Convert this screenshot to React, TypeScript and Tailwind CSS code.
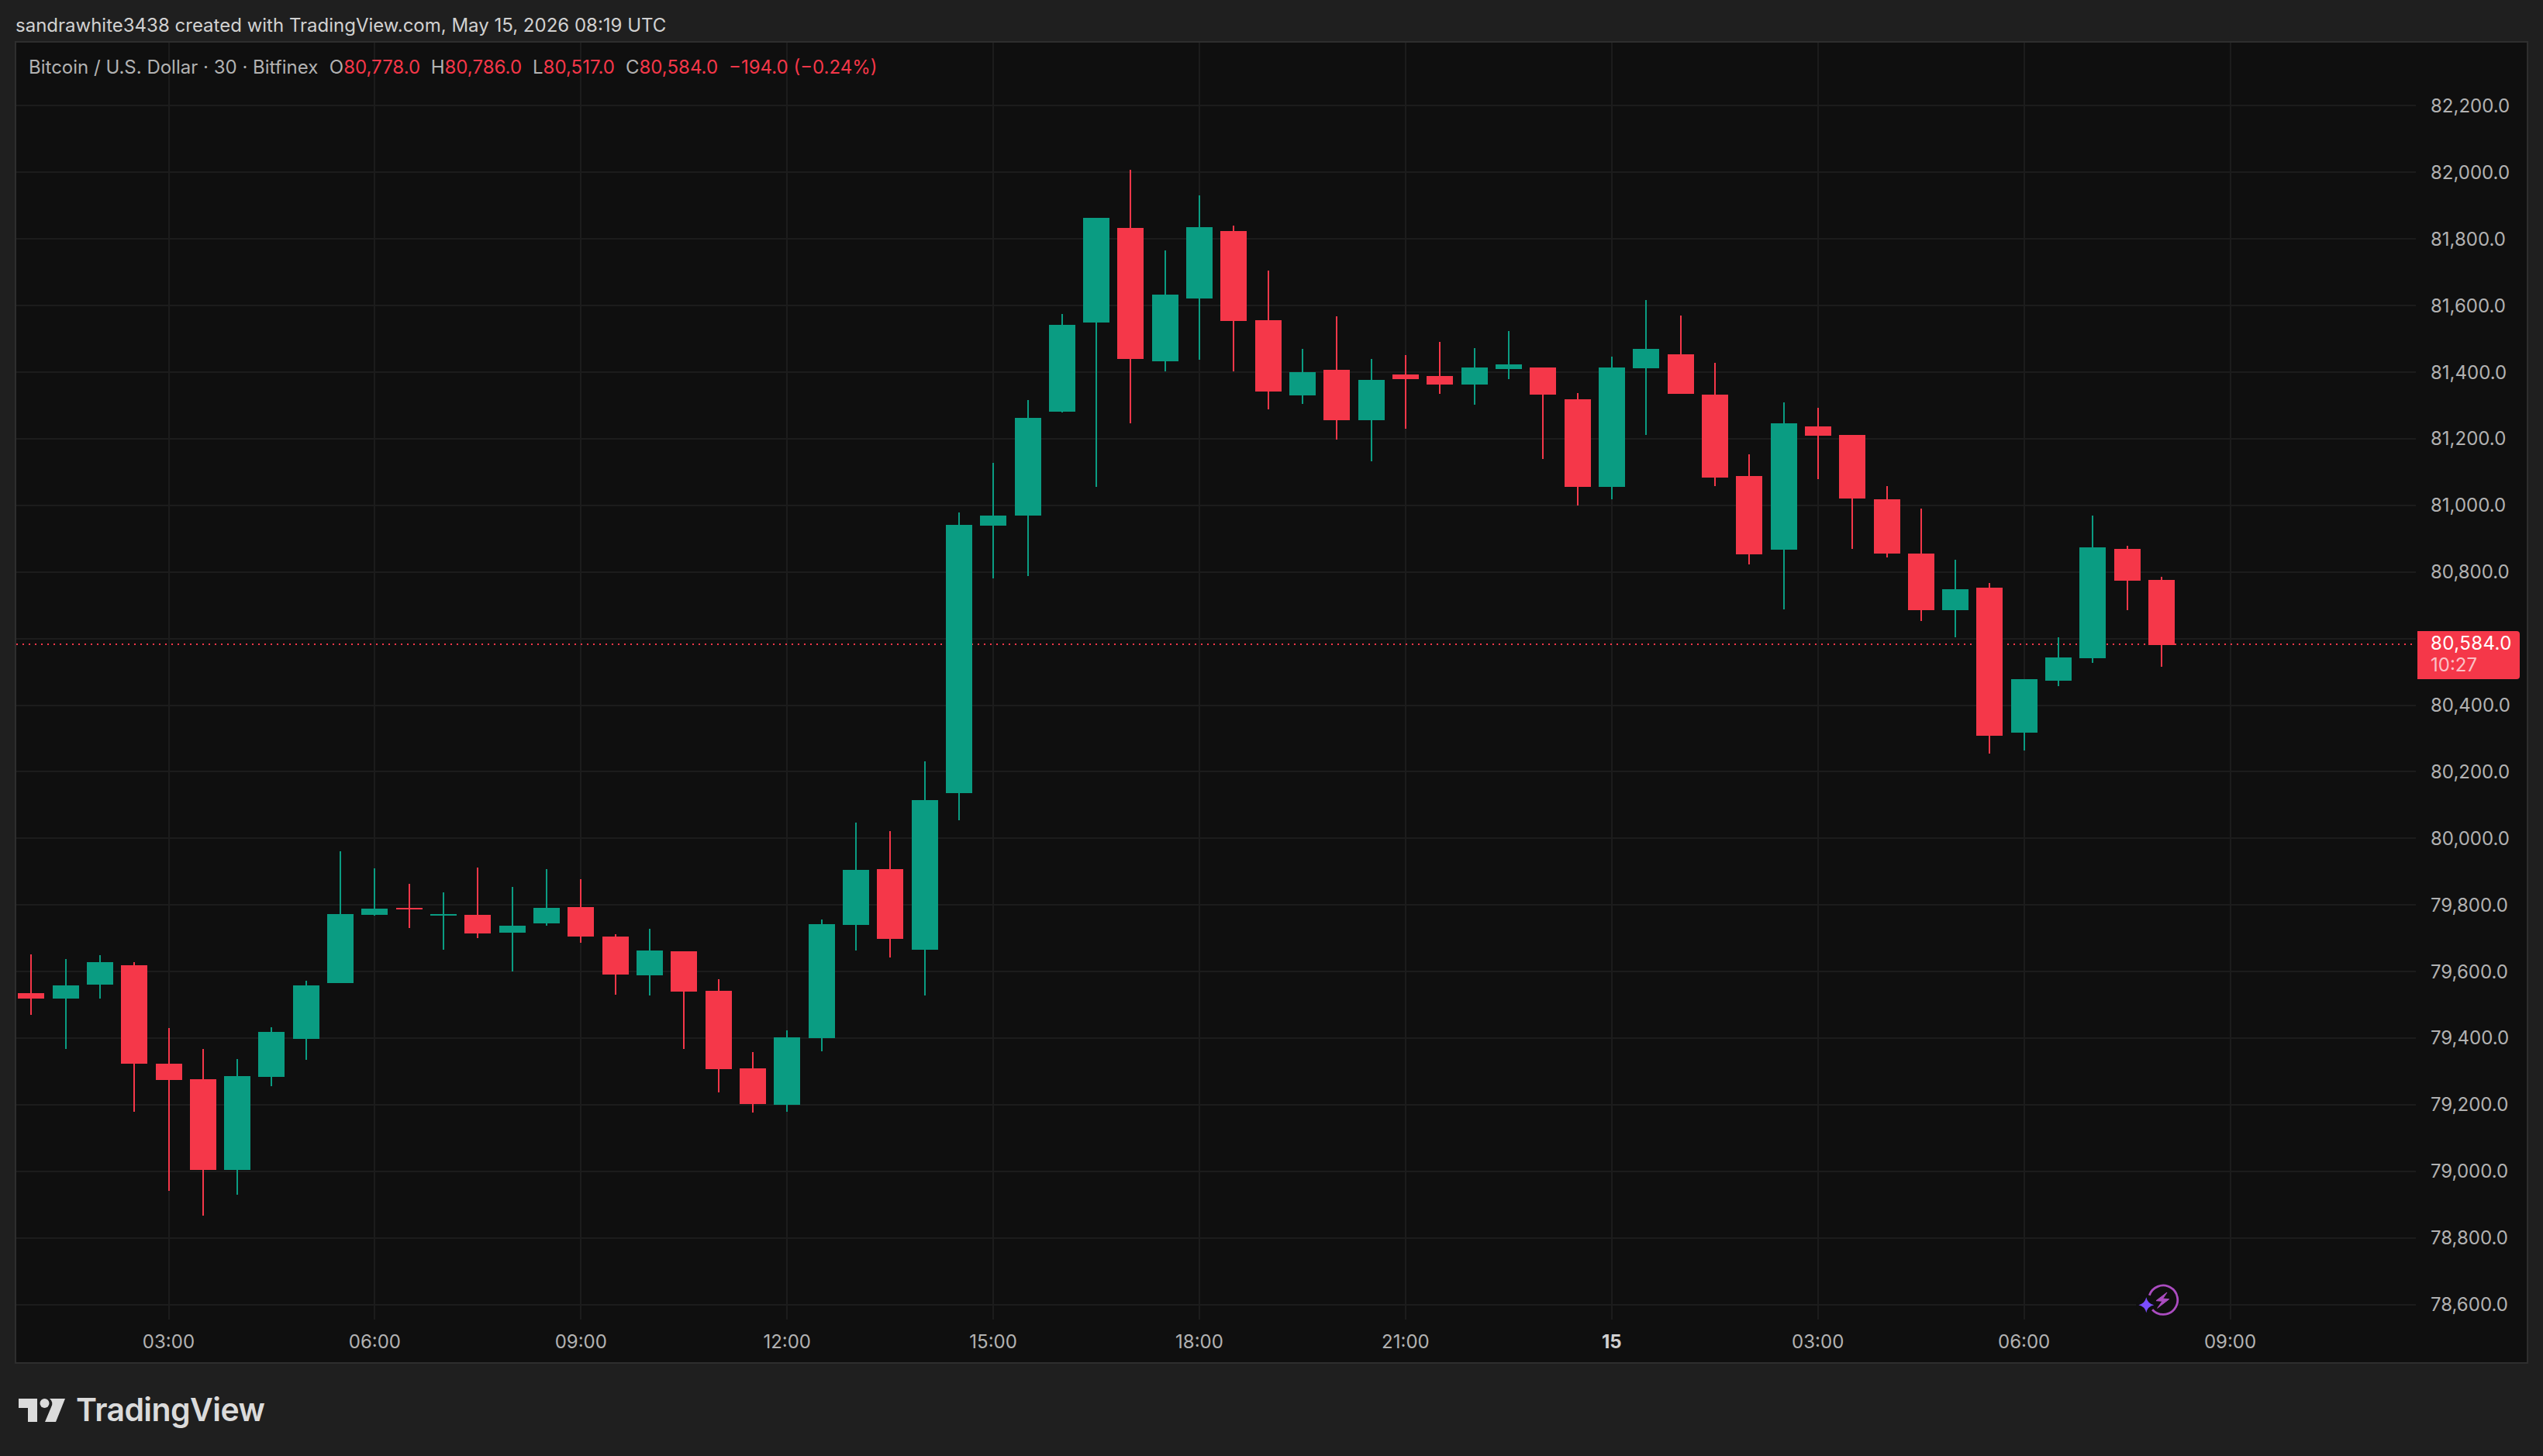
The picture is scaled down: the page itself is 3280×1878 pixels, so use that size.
import React from "react";

const UP = "#0a9c82";
const DOWN = "#f53749";

// wick top, body top, body bottom, wick bottom (page pixels), direction
type Candle = [number, number, number, number, "u" | "d"];

const candles: Candle[] = [
  [1231, 1281, 1288, 1309, "d"],
  [1237, 1271, 1288, 1353, "u"],
  [1232, 1241, 1270, 1288, "u"],
  [1241, 1245, 1372, 1434, "d"],
  [1326, 1372, 1393, 1536, "d"],
  [1353, 1392, 1509, 1568, "d"],
  [1366, 1388, 1509, 1541, "u"],
  [1325, 1331, 1389, 1401, "u"],
  [1265, 1271, 1340, 1367, "u"],
  [1098, 1179, 1268, 1268, "u"],
  [1120, 1172, 1180, 1181, "u"],
  [1140, 1171, 1173, 1197, "d"],
  [1151, 1179, 1181, 1225, "u"],
  [1119, 1180, 1204, 1210, "d"],
  [1144, 1194, 1203, 1253, "u"],
  [1121, 1171, 1191, 1194, "u"],
  [1134, 1170, 1208, 1216, "d"],
  [1205, 1208, 1257, 1283, "d"],
  [1198, 1226, 1258, 1284, "u"],
  [1227, 1227, 1279, 1353, "d"],
  [1263, 1278, 1379, 1409, "d"],
  [1357, 1378, 1424, 1435, "d"],
  [1329, 1338, 1425, 1434, "u"],
  [1186, 1192, 1339, 1356, "u"],
  [1061, 1122, 1193, 1226, "u"],
  [1072, 1121, 1211, 1235, "d"],
  [982, 1032, 1225, 1284, "u"],
  [661, 677, 1023, 1058, "u"],
  [597, 665, 678, 746, "u"],
  [516, 539, 665, 743, "u"],
  [405, 419, 531, 532, "u"],
  [281, 281, 416, 628, "u"],
  [219, 294, 463, 546, "d"],
  [323, 380, 466, 479, "u"],
  [252, 293, 385, 464, "u"],
  [291, 298, 414, 479, "d"],
  [349, 413, 505, 528, "d"],
  [450, 480, 510, 521, "u"],
  [408, 477, 542, 567, "d"],
  [463, 490, 542, 595, "u"],
  [458, 483, 489, 553, "d"],
  [441, 485, 496, 508, "d"],
  [449, 474, 496, 522, "u"],
  [427, 470, 476, 489, "u"],
  [474, 474, 509, 592, "d"],
  [507, 515, 628, 652, "d"],
  [460, 474, 628, 644, "u"],
  [387, 450, 475, 561, "u"],
  [407, 457, 508, 508, "d"],
  [468, 509, 616, 627, "d"],
  [586, 614, 715, 728, "d"],
  [519, 546, 709, 786, "u"],
  [526, 550, 562, 618, "d"],
  [561, 561, 643, 708, "d"],
  [627, 644, 714, 719, "d"],
  [656, 714, 787, 801, "d"],
  [722, 760, 787, 822, "u"],
  [752, 758, 949, 972, "d"],
  [876, 876, 945, 968, "u"],
  [822, 848, 878, 885, "u"],
  [665, 706, 849, 855, "u"],
  [704, 708, 749, 787, "d"],
  [744, 748, 832, 860, "d"],
];

// the 80,600.0 row sits behind the last price tag
const priceLabels = [
  "82,200.0", "82,000.0", "81,800.0", "81,600.0", "81,400.0", "81,200.0", "81,000.0",
  "80,800.0", "", "80,400.0", "80,200.0", "80,000.0", "79,800.0", "79,600.0",
  "79,400.0", "79,200.0", "79,000.0", "78,800.0", "78,600.0",
];

const timeLabels = ["03:00", "06:00", "09:00", "12:00", "15:00", "18:00", "21:00", "15", "03:00", "06:00", "09:00"];

const GRID = "#1c1c1c";
const hLines = priceLabels.map((_, k) => Math.round(136.4 + 85.9 * k));
const vLines = timeLabels.map((_, k) => Math.round(217.5 + 265.92 * k));

function Chart() {
  return (
    <svg width="3095" height="1647" viewBox="21 55 3095 1647" className="block shrink-0">
      {hLines.map((y) => (
        <rect key={y} x="21" y={y - 1} width="3095" height="2" fill={GRID} />
      ))}
      {vLines.map((x) => (
        <rect key={x} x={x - 1} y="55" width="2" height="1647" fill={GRID} />
      ))}

      {/* last price line */}
      <line x1="21" y1="831" x2="3116" y2="831" stroke={DOWN} strokeWidth="2" strokeDasharray="2 6" />

      {candles.map(([wt, bt, bb, wb, dir], i) => {
        const x = Math.round(217.5 + 44.32 * (i - 4));
        const c = dir === "u" ? UP : DOWN;
        return (
          <g key={i} fill={c}>
            <rect x={x - 1} y={wt} width="2" height={wb - wt} />
            <rect x={x - 17} y={bt} width="34" height={bb - bt} />
          </g>
        );
      })}

      {/* events badge */}
      <circle cx="2790" cy="1676.7" r="21" fill="#0f0f0f" />
      <circle cx="2768.3" cy="1683.3" r="13" fill="#0f0f0f" />
      <path d="M2772.3 1670.8A18.7 18.7 0 1 1 2776.1 1689.2" fill="none" stroke="#ab4cc0" strokeWidth="2.8" />
      <path d="M2795 1667L2781 1677.7L2789 1678.3L2782.7 1687.3L2797.7 1675.7L2789.7 1675Z" fill="#ab4cc0" stroke="#ab4cc0" strokeWidth="1" strokeLinejoin="round" />
      <path d="M2768.3 1673.3Q2770 1681.5 2778.3 1683.3Q2770 1685 2768.3 1693.3Q2766.5 1685 2758.3 1683.3Q2766.5 1681.5 2768.3 1673.3Z" fill="#7a4dff" />
    </svg>
  );
}

function Legend() {
  return (
    <div className="absolute left-[16px] top-[17px] flex items-center text-[24px] leading-[30px] text-[#b2b2b2] whitespace-nowrap">
      <span>Bitcoin / U.S. Dollar · 30 · Bitfinex</span>
      <span className="ml-[14.5px]">O<span className="text-[#f53749]">80,778.0</span></span>
      <span className="ml-[13.5px]">H<span className="text-[#f53749]">80,786.0</span></span>
      <span className="ml-[14px]">L<span className="text-[#f53749]">80,517.0</span></span>
      <span className="ml-[14px]">C<span className="text-[#f53749]">80,584.0</span></span>
      <span className="ml-[14px] text-[#f53749]">−194.0 (−0.24%)</span>
    </div>
  );
}

function Logo() {
  return (
    <div className="flex items-center gap-[14px]">
      <svg width="60" height="30" viewBox="0 0 60 30" fill="#dbdbdb">
        <path d="M0 0H24V30H12V12H0Z" />
        <circle cx="33.5" cy="6" r="6" />
        <path d="M40 0H60L48 30H34L42 11A8 8 0 0 0 40 0Z" />
      </svg>
      <span className="text-[41px] leading-none font-semibold tracking-[-0.6px] text-[#dbdbdb]">TradingView</span>
    </div>
  );
}

export default function App() {
  return (
    <div className="flex h-[1878px] w-[3280px] flex-col overflow-hidden bg-[#1f1f1f] font-[Inter,'Liberation_Sans',sans-serif]">
      <div className="h-[53px] pl-[20px] pt-[18px] text-[24px] leading-[30px] text-[#d1d1d1] whitespace-nowrap">
        sandrawhite3438 created with TradingView.com, May 15, 2026 08:19 UTC
      </div>

      <div className="relative ml-[19px] flex h-[1706px] w-[3242px] flex-col border-2 border-[#2e2e2e] bg-[#0f0f0f]">
        <div className="flex h-[1647px]">
          <Chart />
          <div className="flex-1 pl-[19px] pt-[39px] text-[24px] text-[#b2b2b2]">
            {priceLabels.map((p, i) => (
              <div key={i} className="flex h-[85.9px] items-center">{p}</div>
            ))}
          </div>
        </div>

        <div className="flex flex-1 items-center pl-[63.5px] pt-[3px] text-[24px] text-[#b2b2b2]">
          {timeLabels.map((t, i) => (
            <div key={i} className={t === "15" ? "w-[265.92px] text-center font-bold text-[#d1d1d1]" : "w-[265.92px] text-center"}>
              {t}
            </div>
          ))}
        </div>

        <Legend />

        {/* last price tag */}
        <div className="absolute left-[3097px] top-[759px] h-[62px] w-[132px] rounded-r-[4px] bg-[#f53749] pl-[17px] pt-[2px] text-[24px] leading-[28px]">
          <div className="tracking-[0.4px] text-white">80,584.0</div>
          <div className="text-white/70">10:27</div>
        </div>
      </div>

      <div className="flex flex-1 items-center pl-[24px]">
        <Logo />
      </div>
    </div>
  );
}
